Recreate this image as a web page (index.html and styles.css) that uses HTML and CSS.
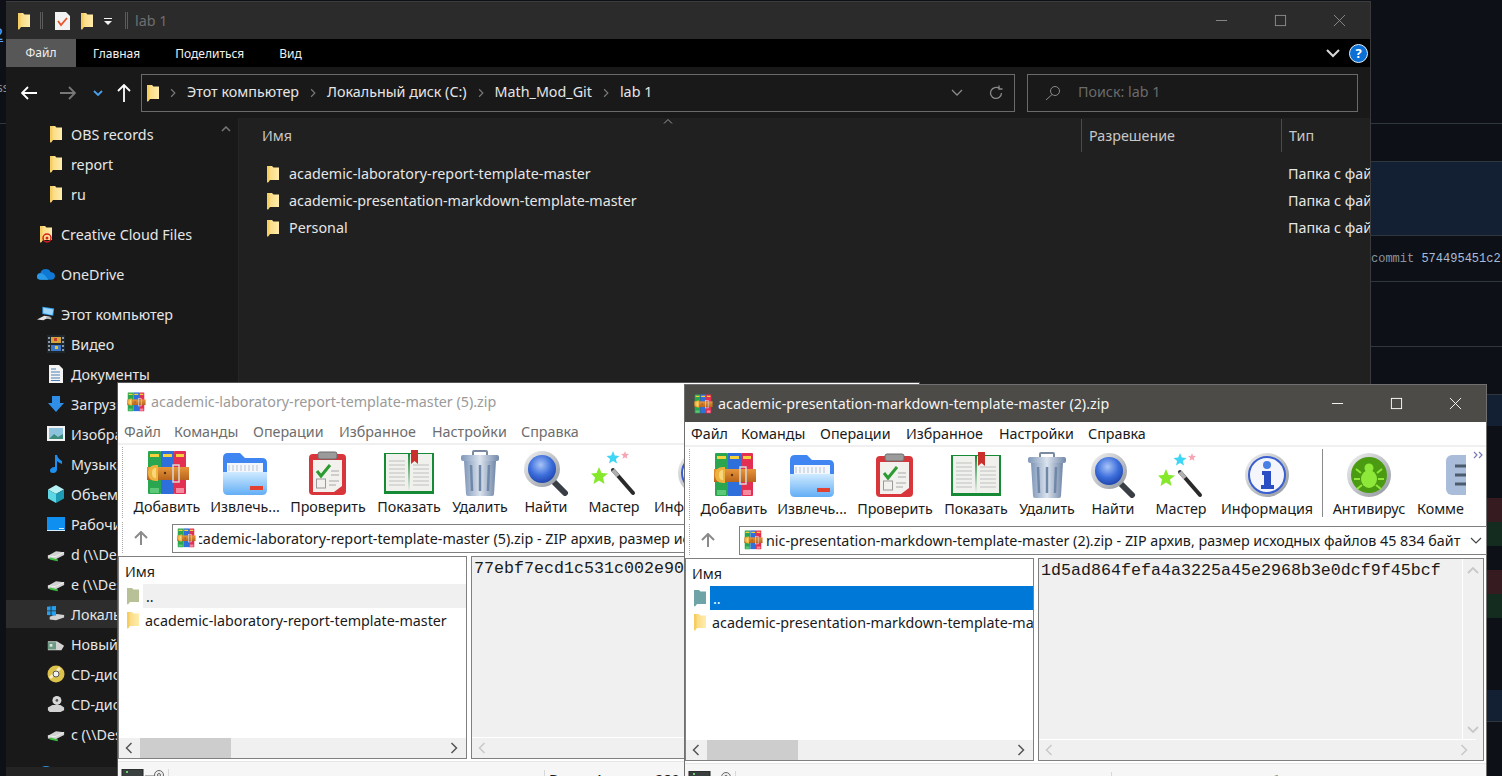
FILE: index.html
```html
<!DOCTYPE html>
<html lang="ru">
<head>
    <meta charset="UTF-8">
    <title>lab 1</title>
    <link rel="stylesheet" href="styles.css">
</head>
<body>
<svg class="defs" width="0" height="0">
    <defs>
        <linearGradient id="gFolder" x1="0" y1="0" x2="1" y2="0"><stop offset="0" stop-color="#f8d677"/><stop offset="1" stop-color="#ffecad"/></linearGradient>
        <linearGradient id="gBelt" x1="0" y1="0" x2="0" y2="1"><stop offset="0" stop-color="#e8963a"/><stop offset="1" stop-color="#b8641c"/></linearGradient>
        <linearGradient id="gBlue" x1="0" y1="0" x2="0" y2="1"><stop offset="0" stop-color="#cfeaff"/><stop offset="1" stop-color="#63aef5"/></linearGradient>
        <linearGradient id="gTrash" x1="0" y1="0" x2="1" y2="0"><stop offset="0" stop-color="#7f97b8"/><stop offset=".5" stop-color="#dbe3ee"/><stop offset="1" stop-color="#7288a8"/></linearGradient>
        <radialGradient id="gGlass" cx=".45" cy=".35" r=".7"><stop offset="0" stop-color="#a9c4f7"/><stop offset=".55" stop-color="#3d6fdc"/><stop offset="1" stop-color="#1b3fa8"/></radialGradient>
        <linearGradient id="gSilver" x1="0" y1="0" x2="1" y2="1"><stop offset="0" stop-color="#f2f2f2"/><stop offset="1" stop-color="#8f959c"/></linearGradient>

        <symbol id="folder" viewBox="0 0 18 18">
            <path d="M3 1h5l1.500 1.500H15V15H6l-2 2.500-1-.500z" fill="url(#gFolder)"/>
            <path d="M3 1h2.500v13.500L4 17.500 3 17z" fill="#f6cd62"/>
        </symbol>
        <symbol id="folderflat" viewBox="0 0 18 18">
            <path d="M3 1h5l1.500 1.500H15V15H6l-2 2.500-1-.500z" fill="currentColor"/>
        </symbol>
        <symbol id="rar" viewBox="0 0 46 46">
            <rect x="4" y="1" width="13" height="43" rx="1" fill="#2aa650"/>
            <rect x="17" y="1" width="13" height="43" fill="#2f6fdc"/>
            <rect x="30" y="1" width="12" height="43" rx="1" fill="#e22f52"/>
            <path d="M6 4h9v3H6zM19 4h9v3h-9zM32 4h8v3h-8z" fill="#f4d23c"/>
            <path d="M6 38h9v5H6z" fill="#5cc878"/>
            <path d="M32 38h8v5h-8z" fill="#f58aa0"/>
            <rect x="3" y="17" width="42" height="13" fill="url(#gBelt)"/>
            <path d="M12 15c-5 0-8 3-8 8s3 8 8 8h2V15z" fill="#eeb23f"/>
            <path d="M12 18c-3 0-4 2-4 5s1 5 4 5z" fill="#f8d77a"/>
            <rect x="29" y="15" width="6" height="17" fill="none" stroke="#d9d9d9" stroke-width="1.500"/>
            <circle cx="21" cy="23" r="1.200" fill="#5a3210"/>
        </symbol>
        <symbol id="extract" viewBox="0 0 46 46">
            <path d="M1 8q0-5 5-5h12l5 5h17q5 0 5 5v14H1z" fill="#3f86f2"/>
            <rect x="5" y="13" width="36" height="18" fill="#f3f6fa"/>
            <path d="M7 15v6M11 15v6M15 15v6M19 15v6M23 15v6M27 15v6M31 15v6M35 15v6" stroke="#b6c4d6"/>
            <path d="M1 22h44v18q0 5-5 5H6q-5 0-5-5z" fill="url(#gBlue)"/>
            <rect x="28" y="36" width="13" height="4" fill="#e2412f"/>
        </symbol>
        <symbol id="check" viewBox="0 0 46 46">
            <rect x="4" y="4" width="37" height="41" rx="4" fill="#d8363a"/>
            <path d="M8 10h29v26l-8 6H8z" fill="#f2f1ee"/>
            <rect x="13" y="2" width="19" height="7" rx="2" fill="#9b9b9b" stroke="#6d6d6d"/>
            <path d="M12 21l4 5 9-11" fill="none" stroke="#2d9b32" stroke-width="3"/>
            <rect x="11.500" y="29" width="9" height="9" fill="none" stroke="#9a9a9a"/>
            <path d="M26 21h8M26 25h8M24 31h10M24 35h7" stroke="#a8a8a8"/>
        </symbol>
        <symbol id="book" viewBox="0 0 50 46">
            <rect x="0" y="3" width="50" height="41" fill="#178a36"/>
            <path d="M2 4h22l1 37H2zM48 4H26l-1 37h23z" fill="#f0f0ec"/>
            <path d="M5 11h16M5 15h16M5 19h16M5 23h16M5 27h16M5 31h16M5 35h16M29 15h16M29 19h16M29 23h16M29 27h16M29 31h16M29 35h16" stroke="#d0d0d0" stroke-width="1.500"/>
            <path d="M27 0h7v14l-3.500-3-3.500 3z" fill="#c9302c"/>
        </symbol>
        <symbol id="trash" viewBox="0 0 40 46">
            <rect x="13" y="1" width="14" height="5" rx="1" fill="none" stroke="#7a8aa0" stroke-width="2"/>
            <rect x="1" y="5" width="38" height="6" rx="2" fill="url(#gTrash)"/>
            <path d="M4 11h32l-2 33q0 2-2 2H8q-2 0-2-2z" fill="url(#gTrash)"/>
            <path d="M11 15l1 26M20 15v26M29 15l-1 26" stroke="#7088a8" stroke-width="2.500"/>
        </symbol>
        <symbol id="lens" viewBox="0 0 46 46">
            <path d="M29 30l13 13" stroke="#3a3f46" stroke-width="6" stroke-linecap="round"/>
            <circle cx="19" cy="19" r="18" fill="url(#gSilver)"/>
            <circle cx="19" cy="19" r="14" fill="url(#gGlass)"/>
        </symbol>
        <symbol id="wand" viewBox="0 0 46 46">
            <path d="M22 20l20 23" stroke="#2a2a2a" stroke-width="4" stroke-linecap="round"/>
            <path d="M22 20l5 6" stroke="#b0b0b0" stroke-width="4"/>
            <path d="M8 17l2.500 6 6.500.500-5 4 1.500 6.500L8 30.500 2.500 34 4 27.500l-4-4 5.500-.500z" fill="#85e82a"/>
            <path d="M22 1l1.800 4.500 4.700.400-3.600 3 1.100 4.600-4-2.500-4 2.500 1.100-4.600-3.600-3 4.700-.400z" fill="#3fd6f5"/>
            <path d="M34 1l1 2.800 3 .200-2.300 1.900.800 2.900-2.500-1.600-2.500 1.600.800-2.900L30 4l3-.200z" fill="#f7a5b5"/>
        </symbol>
        <symbol id="info" viewBox="0 0 46 46">
            <circle cx="23" cy="23" r="22" fill="url(#gSilver)"/>
            <circle cx="23" cy="23" r="18" fill="#f4f6fb" stroke="#3a5fd0" stroke-width="2"/>
            <circle cx="23" cy="13" r="4" fill="#4a7fe6"/>
            <path d="M18 19h9v14h3v4H17v-4h3V23h-2z" fill="#2a4fc4"/>
        </symbol>
        <symbol id="bug" viewBox="0 0 46 46">
            <circle cx="23" cy="23" r="22" fill="url(#gSilver)"/>
            <circle cx="23" cy="23" r="18" fill="#4a9a12"/>
            <ellipse cx="23" cy="27" rx="8" ry="9" fill="#8ee83a"/>
            <circle cx="23" cy="16" r="4.500" fill="#8ee83a"/>
            <path d="M15 21l-5-4M31 21l5-4M14 27H8M32 27h6M16 33l-5 4M30 33l5 4" stroke="#8ee83a" stroke-width="2"/>
        </symbol>
        <symbol id="note" viewBox="0 0 46 46">
            <rect x="3" y="3" width="40" height="40" rx="6" fill="#a9bddb"/>
            <path d="M12 14h24M12 23h24M12 32h24" stroke="#4c5a6e" stroke-width="3"/>
        </symbol>
        <symbol id="chev" viewBox="0 0 8 12">
            <path d="M1.500 1l5 5-5 5" fill="none" stroke="currentColor" stroke-width="1.500"/>
        </symbol>
        <symbol id="video" viewBox="0 0 18 18">
            <rect x="0" y="0" width="18" height="18" fill="#20282f"/>
            <rect x="4" y="2" width="10" height="6" fill="#d8a23a"/><rect x="4" y="10" width="10" height="6" fill="#3d78c9"/>
            <path d="M7 3h3v3H7z" fill="#c2402e"/><path d="M8 11h3v3H8z" fill="#e2c23a"/>
            <path d="M1 2h2v2H1zM1 6h2v2H1zM1 10h2v2H1zM1 14h2v2H1zM15 2h2v2h-2zM15 6h2v2h-2zM15 10h2v2h-2zM15 14h2v2h-2z" fill="#8b97a3"/>
        </symbol>
        <symbol id="doc" viewBox="0 0 18 18">
            <path d="M2 0h10l4 4v14H2z" fill="#f4f4f4"/>
            <path d="M4 4h5M4 7h9M4 10h9M4 13h9M4 15.500h9" stroke="#4a7fb5"/>
        </symbol>
        <symbol id="dl" viewBox="0 0 18 18"><path d="M5 1h8v7h4l-8 9-8-9h4z" fill="#2f8fe8"/></symbol>
        <symbol id="pic" viewBox="0 0 18 18">
            <rect y="1" width="18" height="15" fill="#f2f2f2"/>
            <rect x="2" y="3" width="14" height="11" fill="#8ec3dd"/>
            <path d="M2 14l5-5 4 3 5-3v5z" fill="#3d8c7c"/>
        </symbol>
        <symbol id="music" viewBox="0 0 18 18"><path d="M8 0h2q1 4 5 6v3q-3-1-5-3v8q0 4-4 4-3 0-3-2.500T7 12h1z" fill="#1f8fee"/></symbol>
        <symbol id="cube" viewBox="0 0 18 18">
            <path d="M9 0l8 4.500L9 9 1 4.500z" fill="#b5f1f5"/><path d="M1 4.500L9 9v9l-8-4.500z" fill="#5fd6e3"/><path d="M17 4.500L9 9v9l8-4.500z" fill="#1c9db5"/>
        </symbol>
        <symbol id="desk" viewBox="0 0 18 18">
            <rect y="2" width="18" height="13" fill="#0f8ff0"/>
            <path d="M0 15h18v1H0zM12 13h5v1h-5z" fill="#d7ecff"/>
        </symbol>
        <symbol id="netdrive" viewBox="0 0 20 18">
            <path d="M1 11l9-5 9 1v3l-10 5-8-1z" fill="#d2d2d2"/>
            <path d="M1 11l8 1 10-5" fill="none" stroke="#f2f2f2"/>
            <path d="M3 14l9 2" stroke="#40c040" stroke-width="2"/>
        </symbol>
        <symbol id="windrive" viewBox="0 0 20 18">
            <path d="M3 12l8-3 8 1v3l-9 3-7-1z" fill="#d2d2d2"/>
            <path d="M0 1l4-.500V5H0zM5 .400L10 0v5H5zM0 6h4v4.500L0 10zM5 6h5v5l-5-.500z" fill="#25a0ee"/>
        </symbol>
        <symbol id="picdrive" viewBox="0 0 20 18">
            <path d="M1 6h10l8 5-3 5H1z" fill="#d2d2d2"/>
            <rect x="1" y="7" width="9" height="8" fill="#6b9a83"/>
            <rect x="3" y="9" width="3" height="3" fill="#e2e2e2"/>
        </symbol>
        <symbol id="cd" viewBox="0 0 18 18">
            <circle cx="9" cy="9" r="8.500" fill="#dcc24a"/>
            <path d="M3 13L13 3" stroke="#f5ecc0" stroke-width="3"/>
            <circle cx="9" cy="9" r="3" fill="#f2f2f2" stroke="#555"/>
        </symbol>
        <symbol id="cddrive" viewBox="0 0 20 18">
            <circle cx="11" cy="5" r="5" fill="#d8d8d8"/><circle cx="11" cy="5" r="1.500" fill="#555"/>
            <path d="M1 13l5-3h9l4 3v3l-4 2H3l-2-2z" fill="#d2d2d2"/>
        </symbol>
        <symbol id="cloud" viewBox="0 0 22 14">
            <path d="M5 14q-5 0-5-4 0-3.500 4-4 1.500-5 7-5 4 0 5.500 3.500 5.500.500 5.500 5 0 4.500-5 4.500z" fill="#0f78d4"/>
            <path d="M5 14q-5 0-5-4 0-3.500 4-4 4 0 6 3l4 5z" fill="#2a9ae8"/>
        </symbol>
        <symbol id="pc" viewBox="0 0 20 18">
            <path d="M6 1l13 2-1 8-12-2z" fill="#36a4f0"/>
            <path d="M7 2l11 2-1 6-10-2z" fill="#9dd6fa"/>
            <path d="M0 15l8-4 7 1-8 4z" fill="#e4e4e4"/>
            <path d="M10 12l6 1v2l-6-1z" fill="#bdbdbd"/>
        </symbol>
        <symbol id="globe" viewBox="0 0 18 18"><circle cx="9" cy="9" r="8" fill="#2f8fd8"/></symbol>
        <symbol id="tray" viewBox="0 0 44 14">
            <rect x="1" y="0" width="21" height="14" fill="#3a3f3f" stroke="#222"/>
            <path d="M5 2h2v2H5z" fill="#6fd06f"/>
            <path d="M24 8h10l2-2" fill="none" stroke="#666" stroke-width="3"/>
            <circle cx="38" cy="6" r="4.500" fill="#eee" stroke="#666"/>
            <circle cx="38" cy="6" r="1.500" fill="none" stroke="#666"/>
        </symbol>
    </defs>
</svg>

<div class="desktop">
    <!-- страница за окнами -->
    <div class="bg">
        <div class="bg-row bg-first"><span class="bg-link">2</span><span class="bg-cut">ss</span></div>
        <div class="bg-row"></div>
        <div class="bg-row line blue"></div>
        <div class="bg-row line"><span class="commit">commit <b>574495451c2</b></span></div>
        <div class="bg-row line"></div>
        <div class="bg-row line"></div>
        <div class="bg-row line blue"></div>
        <div class="bg-row"></div>
        <div class="bg-row red"></div>
        <div class="bg-row green"></div>
        <div class="bg-row"></div>
        <div class="bg-row red"></div>
        <div class="bg-row green"></div>
        <div class="bg-row"></div>
        <div class="bg-row blue"></div>
        <div class="bg-row line"></div>
    </div>

    <!-- проводник -->
    <div class="ex">
        <div class="ex-title">
            <svg class="ico"><use href="#folder"/></svg>
            <i class="ex-sep"></i>
            <svg class="ex-task" viewBox="0 0 15 18">
                <path d="M0 0h11l4 4v14H0z" fill="#f2f2f2"/>
                <path d="M3 9l3 4 6-7" fill="none" stroke="#e8542a" stroke-width="1.800"/>
            </svg>
            <svg class="ico"><use href="#folder"/></svg>
            <svg class="ex-drop" viewBox="0 0 8 7"><path d="M0 0h8v1H0zM0 3h8L4 7z" fill="#f2f2f2"/></svg>
            <i class="ex-sep ex-sep-last"></i>
            <span class="ex-name">lab 1</span>
            <div class="ex-caption">
                <svg viewBox="0 0 14 14"><path d="M1 7h12" stroke="currentColor"/></svg>
                <svg viewBox="0 0 14 14"><rect x="1.500" y="1.500" width="11" height="11" fill="none" stroke="currentColor"/></svg>
                <svg viewBox="0 0 14 14"><path d="M1 1l12 12M13 1L1 13" stroke="currentColor"/></svg>
            </div>
        </div>
        <div class="ex-tabs">
            <span class="tab-file">Файл</span>
            <span class="tab-home">Главная</span>
            <span class="tab-share">Поделиться</span>
            <span class="tab-view">Вид</span>
            <svg class="tabs-fold" viewBox="0 0 14 9"><path d="M1 1l6 6 6-6" fill="none" stroke="#d8d8d8" stroke-width="2"/></svg>
            <span class="help">?</span>
        </div>
        <div class="ex-nav">
            <svg class="nav-back" viewBox="0 0 16 14"><path d="M7 1L1 7l6 6M1 7h15" fill="none" stroke="#fff" stroke-width="1.800"/></svg>
            <svg class="nav-fwd" viewBox="0 0 16 14"><path d="M9 1l6 6-6 6M15 7H0" fill="none" stroke="#777" stroke-width="1.800"/></svg>
            <svg class="nav-recent" viewBox="0 0 10 6"><path d="M1 1l4 4 4-4" fill="none" stroke="#4a9fe8" stroke-width="1.800"/></svg>
            <svg class="nav-up" viewBox="0 0 14 18"><path d="M1 7l6-6 6 6M7 1v17" fill="none" stroke="#fff" stroke-width="1.800"/></svg>
            <div class="addr">
                <svg class="ico addr-folder"><use href="#folder"/></svg>
                <svg class="crumb-chev"><use href="#chev"/></svg><span>Этот компьютер</span>
                <svg class="crumb-chev"><use href="#chev"/></svg><span>Локальный диск (C:)</span>
                <svg class="crumb-chev"><use href="#chev"/></svg><span>Math_Mod_Git</span>
                <svg class="crumb-chev"><use href="#chev"/></svg><span>lab 1</span>
                <svg class="addr-drop" viewBox="0 0 12 7"><path d="M1 1l5 5 5-5" fill="none" stroke="#8a8a8a" stroke-width="1.300"/></svg>
                <svg class="addr-refresh" viewBox="0 0 16 16"><path d="M13.500 8a5.500 5.500 0 1 1-2-4.300M11 .500v3.500h3.500" fill="none" stroke="#8a8a8a" stroke-width="1.300"/></svg>
            </div>
            <div class="search">
                <svg viewBox="0 0 16 16"><circle cx="10" cy="6" r="4.500" fill="none" stroke="#8a8a8a"/><path d="M7 9.500L1 15" stroke="#8a8a8a"/></svg>
                <span>Поиск: lab 1</span>
            </div>
        </div>
        <div class="ex-body">
            <div class="side">
                <svg class="side-up" viewBox="0 0 10 6"><path d="M1 5l4-4 4 4" fill="none" stroke="#777" stroke-width="1.500"/></svg>
                <div class="side-row sub"><svg class="ico"><use href="#folder"/></svg>OBS records</div>
                <div class="side-row sub"><svg class="ico"><use href="#folder"/></svg>report</div>
                <div class="side-row sub group-end"><svg class="ico"><use href="#folder"/></svg>ru</div>
                <div class="side-row top group-end">
                    <svg class="ico" viewBox="0 0 18 18"><use href="#folder"/><circle cx="10" cy="13" r="4" fill="none" stroke="#d8201c" stroke-width="1.500"/><circle cx="10" cy="13" r="1.500" fill="#d8201c"/></svg>Creative Cloud Files
                </div>
                <div class="side-row top group-end"><svg class="ico ico-cloud"><use href="#cloud"/></svg>OneDrive</div>
                <div class="side-row top"><svg class="ico"><use href="#pc"/></svg>Этот компьютер</div>
                <div class="side-row sub"><svg class="ico"><use href="#video"/></svg>Видео</div>
                <div class="side-row sub"><svg class="ico"><use href="#doc"/></svg>Документы</div>
                <div class="side-row sub"><svg class="ico"><use href="#dl"/></svg>Загрузки</div>
                <div class="side-row sub"><svg class="ico"><use href="#pic"/></svg>Изображения</div>
                <div class="side-row sub"><svg class="ico"><use href="#music"/></svg>Музыка</div>
                <div class="side-row sub"><svg class="ico"><use href="#cube"/></svg>Объемные объекты</div>
                <div class="side-row sub"><svg class="ico"><use href="#desk"/></svg>Рабочий стол</div>
                <div class="side-row sub"><svg class="ico"><use href="#netdrive"/></svg>d (\\Desktop)</div>
                <div class="side-row sub"><svg class="ico"><use href="#netdrive"/></svg>e (\\Desktop)</div>
                <div class="side-row sub hover"><svg class="ico"><use href="#windrive"/></svg>Локальный диск (C:)</div>
                <div class="side-row sub"><svg class="ico"><use href="#picdrive"/></svg>Новый том</div>
                <div class="side-row sub"><svg class="ico"><use href="#cd"/></svg>CD-дисковод</div>
                <div class="side-row sub"><svg class="ico"><use href="#cddrive"/></svg>CD-дисковод</div>
                <div class="side-row sub group-end"><svg class="ico"><use href="#netdrive"/></svg>c (\\Desktop)</div>
                <div class="side-row top"><svg class="ico"><use href="#globe"/></svg>Сеть</div>
            </div>
            <div class="files">
                <div class="cols">
                    <span class="col-name">Имя</span>
                    <svg class="col-sort" viewBox="0 0 10 5"><path d="M1 4.500l4-4 4 4" fill="none" stroke="#999"/></svg>
                    <span class="col-next">Разрешение</span>
                    <span class="col-next">Тип</span>
                </div>
                <div class="file"><svg class="ico"><use href="#folder"/></svg><span class="file-name">academic-laboratory-report-template-master</span><span class="file-type">Папка с файлами</span></div>
                <div class="file"><svg class="ico"><use href="#folder"/></svg><span class="file-name">academic-presentation-markdown-template-master</span><span class="file-type">Папка с файлами</span></div>
                <div class="file"><svg class="ico"><use href="#folder"/></svg><span class="file-name">Personal</span><span class="file-type">Папка с файлами</span></div>
            </div>
        </div>
        <div class="ex-status"></div>
    </div>

    <!-- левый архив -->
    <div class="rar rar-back">
        <div class="rar-title">
            <svg class="rar-logo"><use href="#rar"/></svg>
            <span>academic-laboratory-report-template-master (5).zip</span>
        </div>
        <div class="rar-menu"><span>Файл</span><span>Команды</span><span>Операции</span><span>Избранное</span><span>Настройки</span><span>Справка</span></div>
        <div class="bar-row">
            <div class="bar">
                <div class="btn"><svg><use href="#rar"/></svg>Добавить</div>
                <div class="btn"><svg><use href="#extract"/></svg>Извлечь...</div>
                <div class="btn"><svg><use href="#check"/></svg>Проверить</div>
                <div class="btn btn-wide"><svg><use href="#book"/></svg>Показать</div>
                <div class="btn"><svg><use href="#trash"/></svg>Удалить</div>
                <div class="btn"><svg><use href="#lens"/></svg>Найти</div>
                <div class="btn"><svg><use href="#wand"/></svg>Мастер</div>
                <div class="btn"><svg><use href="#info"/></svg>Информация</div>
            </div>
        </div>
        <div class="path">
            <svg class="path-up" viewBox="0 0 14 14"><path d="M1 7l6-6 6 6M7 1v13" fill="none" stroke="#8a8a8a" stroke-width="2"/></svg>
            <div class="path-box">
                <svg class="rar-logo"><use href="#rar"/></svg>
                <span class="path-text path-cut">cademic-laboratory-report-template-master (5).zip - ZIP архив, размер исходных файлов 289 байт</span>
            </div>
        </div>
        <div class="panes">
            <div class="tree">
                <div class="tree-head">Имя</div>
                <div class="tree-row"><svg class="ico tint-back"><use href="#folderflat"/></svg><span class="tree-up idle">..</span></div>
                <div class="tree-row"><svg class="ico"><use href="#folder"/></svg><span class="tree-item">academic-laboratory-report-template-master</span></div>
                <div class="hbar">
                    <svg class="sb-chev flip"><use href="#chev"/></svg>
                    <i class="thumb"></i>
                    <svg class="sb-chev"><use href="#chev"/></svg>
                </div>
            </div>
            <div class="hash">
                <div class="hash-text">77ebf7ecd1c531c002e90</div>
                <div class="hbar hbar-off"><svg class="sb-chev flip"><use href="#chev"/></svg></div>
            </div>
        </div>
        <div class="state">
            <svg class="state-ico"><use href="#tray"/></svg>
            <span class="state-text">Всего: 1 папка, 289 байт</span>
        </div>
    </div>

    <!-- правый архив -->
    <div class="rar">
        <div class="rar-title">
            <svg class="rar-logo"><use href="#rar"/></svg>
            <span>academic-presentation-markdown-template-master (2).zip</span>
            <div class="rar-caption">
                <svg viewBox="0 0 14 14"><path d="M1 7h12" stroke="#fff"/></svg>
                <svg viewBox="0 0 14 14"><rect x="1.500" y="1.500" width="11" height="11" fill="none" stroke="#fff"/></svg>
                <svg viewBox="0 0 14 14"><path d="M1 1l12 12M13 1L1 13" stroke="#fff"/></svg>
            </div>
        </div>
        <div class="rar-menu"><span>Файл</span><span>Команды</span><span>Операции</span><span>Избранное</span><span>Настройки</span><span>Справка</span></div>
        <div class="bar-row">
            <div class="bar">
                <div class="btn"><svg><use href="#rar"/></svg>Добавить</div>
                <div class="btn"><svg><use href="#extract"/></svg>Извлечь...</div>
                <div class="btn"><svg><use href="#check"/></svg>Проверить</div>
                <div class="btn btn-wide"><svg><use href="#book"/></svg>Показать</div>
                <div class="btn"><svg><use href="#trash"/></svg>Удалить</div>
                <div class="btn"><svg><use href="#lens"/></svg>Найти</div>
                <div class="btn"><svg><use href="#wand"/></svg>Мастер</div>
                <div class="btn"><svg><use href="#info"/></svg>Информация</div>
                <i class="bar-sep"></i>
                <div class="btn"><svg><use href="#bug"/></svg>Антивирус</div>
                <div class="btn btn-last"><svg><use href="#note"/></svg>Комме</div>
            </div>
            <svg class="bar-more" viewBox="0 0 11 8"><path d="M1 1l3 3-3 3M6 1l3 3-3 3" fill="none" stroke="#7a7ab8" stroke-width="1.200"/></svg>
        </div>
        <div class="path">
            <svg class="path-up" viewBox="0 0 14 14"><path d="M1 7l6-6 6 6M7 1v13" fill="none" stroke="#8a8a8a" stroke-width="2"/></svg>
            <div class="path-box">
                <svg class="rar-logo"><use href="#rar"/></svg>
                <span class="path-text">nic-presentation-markdown-template-master (2).zip - ZIP архив, размер исходных файлов 45 834 байт</span>
                <svg class="path-drop" viewBox="0 0 12 7"><path d="M1 1l5 5 5-5" fill="none" stroke="#444" stroke-width="1.200"/></svg>
            </div>
        </div>
        <div class="panes">
            <div class="tree">
                <div class="tree-head">Имя</div>
                <div class="tree-row"><svg class="ico tint-sel"><use href="#folderflat"/></svg><span class="tree-up sel">..</span></div>
                <div class="tree-row"><svg class="ico"><use href="#folder"/></svg><span class="tree-item">academic-presentation-markdown-template-ma</span></div>
                <div class="hbar">
                    <svg class="sb-chev flip"><use href="#chev"/></svg>
                    <i class="thumb"></i>
                    <svg class="sb-chev"><use href="#chev"/></svg>
                </div>
            </div>
            <div class="hash">
                <div class="hash-main">
                    <div class="hash-text">1d5ad864fefa4a3225a45e2968b3e0dcf9f45bcf</div>
                    <div class="vbar">
                        <svg viewBox="0 0 12 7"><path d="M1 6l5-5 5 5" fill="none" stroke="#c8c8c8" stroke-width="1.800"/></svg>
                        <svg viewBox="0 0 12 7"><path d="M1 1l5 5 5-5" fill="none" stroke="#c8c8c8" stroke-width="1.800"/></svg>
                    </div>
                </div>
                <div class="hbar hbar-off"><svg class="sb-chev flip"><use href="#chev"/></svg><svg class="sb-chev"><use href="#chev"/></svg></div>
            </div>
        </div>
        <div class="state">
            <svg class="state-ico"><use href="#tray"/></svg>
            <span class="state-text">Всего: 1 папка, 45 834 байт</span>
        </div>
    </div>
</div>
</body>
</html>
```
FILE: styles.css
```css
html, body {
    margin: 0;
    padding: 0;
    background: #0d1117;
}
body {
    font-family: "Noto Sans", Roboto, sans-serif;
    font-size: 14.300px;
    overflow: hidden;
}
.defs {
    position: absolute;
}
.desktop {
    position: relative;
    width: 1502px;
    height: 776px;
    overflow: hidden;
}
.ico {
    flex: none;
    width: 18px;
    height: 18px;
}

/* страница за окнами */
.bg {
    position: absolute;
    inset: 0;
    display: grid;
    grid-template-rows: 124px 37px 74px 46px 65px 48px 32px 72px 24px 24px 24px 24px 24px 72px 31px 1fr;
    padding-left: 6px;
    background: #0d1117;
}
.bg-row {
    display: flex;
    align-items: center;
}
.line {
    border-top: 1px solid #30363d;
}
.blue { background: #132033; }
.red { background: #361b20; }
.green { background: #142b20; }
.bg-first {
    flex-direction: column;
    align-items: flex-start;
    margin-left: -6px;
    border-bottom: 1px solid #30363d;
}
.bg-link {
    margin: 25px 0 0 -6px;
    color: #58a6ff;
    text-decoration: underline;
    font-size: 16px;
    line-height: 18px;
}
.bg-cut {
    margin: 37px 0 0 -3px;
    color: #8b949e;
    font-size: 12px;
    line-height: 16px;
}
.commit {
    margin: 1px 0 0 1365px;
    font-family: "Liberation Mono", monospace;
    font-size: 12px;
    color: #8b949e;
    white-space: nowrap;
}
.commit b {
    font-weight: normal;
    color: #a9bcd8;
}

/* проводник */
.ex {
    position: absolute;
    left: 6px;
    top: 1px;
    width: 1364px;
    height: 774px;
    display: flex;
    flex-direction: column;
    border-top: 1px solid #3c3c3c;
    border-right: 1px solid #3a3a3a;
    color: #e6e6e6;
    background: #191919;
}
.ex-title {
    flex: none;
    height: 37px;
    display: flex;
    align-items: center;
    padding-left: 9px;
    background: #2b2b2b;
}
.ex-sep {
    flex: none;
    width: 1px;
    height: 17px;
    margin: 0 12px 0 7px;
    border: 1px solid #5c5c5c;
    border-width: 0 1px;
}
.ex-sep-last {
    margin: 0 7px 0 13px;
}
.ex-task {
    width: 15px;
    height: 18px;
    margin-right: 8px;
}
.ex-drop {
    width: 8px;
    height: 7px;
    margin: 2px 0 0 8px;
}
.ex-name {
    color: #6f6f6f;
}
.ex-caption {
    margin-left: auto;
    display: flex;
    gap: 46px;
    padding-right: 24px;
    color: #8c8c8c;
}
.ex-caption svg {
    width: 13px;
    height: 13px;
}
.ex-tabs {
    flex: none;
    height: 28px;
    display: flex;
    align-items: center;
    background: #000;
    font-size: 12px;
    color: #f0f0f0;
}
.tab-file {
    width: 70px;
    height: 28px;
    line-height: 28px;
    text-align: center;
    background: #575757;
}
.tab-home { margin-left: 17px; }
.tab-share { margin-left: 35px; }
.tab-view { margin-left: 35px; }
.tabs-fold {
    width: 14px;
    height: 9px;
    margin-left: auto;
}
.help {
    width: 17px;
    height: 17px;
    margin: 0 2px 0 9px;
    border: 1px solid #e8f2fb;
    border-radius: 50%;
    background: #0b6fd6;
    color: #fff;
    font-weight: bold;
    font-size: 13px;
    line-height: 17px;
    text-align: center;
}
.ex-nav {
    flex: none;
    height: 51px;
    display: flex;
    align-items: center;
    background: #191919;
}
.nav-back { width: 16px; height: 14px; margin-left: 15px; }
.nav-fwd { width: 16px; height: 14px; margin-left: 23px; }
.nav-recent { width: 10px; height: 6px; margin-left: 17px; }
.nav-up { width: 14px; height: 18px; margin-left: 14px; }
.addr, .search {
    height: 36px;
    display: flex;
    align-items: center;
    border: 1px solid #6a6a6a;
    white-space: nowrap;
    line-height: 34px;
}
.addr span, .search span {
    height: 36px;
}
.addr {
    width: 872px;
    margin: 0 12px 0 10px;
    color: #e6e6e6;
}
.addr-folder { margin-left: 2px; }
.crumb-chev {
    flex: none;
    width: 6px;
    height: 10px;
    margin: 0 11px 0 11px;
    color: #7a7a7a;
}
.addr-folder + .crumb-chev { margin-left: 8px; }
.addr-drop {
    width: 12px;
    height: 7px;
    margin-left: auto;
}
.addr-refresh {
    width: 16px;
    height: 16px;
    margin: 0 10px 0 25px;
}
.search {
    width: 329px;
    color: #6b6b6b;
}
.search svg {
    width: 16px;
    height: 16px;
    margin: 0 17px 0 17px;
}
.ex-body {
    flex: 1;
    min-height: 0;
    display: flex;
    overflow: hidden;
}
.side {
    position: relative;
    flex: none;
    width: 232px;
    padding-top: 1px;
    background: #191919;
    border-right: 1px solid #262626;
}
.side-up {
    position: absolute;
    right: 7px;
    top: 8px;
    width: 10px;
    height: 6px;
}
.side-row {
    height: 30px;
    display: flex;
    align-items: center;
    white-space: nowrap;
    gap: 6px;
}
.side-row.sub { padding-left: 41px; }
.side-row.top { padding-left: 31px; }
.group-end { margin-bottom: 10px; }
.hover {
    height: 28px;
    margin: 1px 0;
    background: #2d2d2d;
}
.ico-cloud {
    height: 14px;
}
.files {
    flex: 1;
    min-width: 0;
    background: #202020;
    overflow: hidden;
}
.cols {
    position: relative;
    height: 35px;
    display: grid;
    grid-template-columns: 842px 200px 1fr;
    color: #c8c8c8;
    white-space: nowrap;
}
.col-name {
    padding-left: 23px;
    line-height: 35px;
}
.col-sort {
    position: absolute;
    left: 424px;
    top: 1px;
    width: 10px;
    height: 5px;
}
.col-next {
    height: 33px;
    margin-top: 1px;
    line-height: 33px;
    padding-left: 7px;
    border-left: 1px solid #4a4a4a;
}
.file {
    height: 27px;
    display: flex;
    align-items: center;
    padding-left: 25px;
    white-space: nowrap;
}
.cols + .file { margin-top: 7px; }
.file .ico { margin-right: 7px; }
.file-name { width: 999px; flex: none; }
.ex-status {
    flex: none;
    height: 9px;
    background: #232323;
}

/* архиватор */
.rar {
    position: absolute;
    left: 684px;
    top: 384px;
    width: 801px;
    height: 420px;
    display: flex;
    flex-direction: column;
    border: 1px solid #707070;
    background: #fff;
    color: #1a1a1a;
}
.rar-back {
    left: 117px;
    top: 382px;
    border-color: #555;
}
.rar-title {
    flex: none;
    height: 37px;
    display: flex;
    align-items: center;
    padding-left: 8px;
    background: #4d4b48;
    color: #f4f4f4;
    white-space: nowrap;
}
.rar-back .rar-title {
    background: #fff;
    color: #9a9a9a;
}
.rar-logo {
    flex: none;
    width: 20px;
    height: 20px;
    margin-right: 5px;
}
.rar-caption {
    margin-left: auto;
    display: flex;
    gap: 46px;
    padding-right: 24px;
}
.rar-caption svg {
    width: 13px;
    height: 13px;
}
.rar-menu {
    flex: none;
    height: 23px;
    display: grid;
    grid-template-columns: 50px 79px 86px 93px 89px auto;
    align-items: center;
    padding-left: 6px;
    background: #fff;
    white-space: nowrap;
}
.rar-back .rar-menu {
    color: #6d6d6d;
}
.bar-row {
    position: relative;
    flex: none;
    height: 75px;
    display: flex;
    border-top: 2px solid #f0f0f0;
    background: #fff;
}
.bar {
    flex: none;
    width: 781px;
    box-sizing: border-box;
    display: grid;
    grid-template-columns: 74px 82px 84px 78px 64px 68px 68px 104px 6px 88px 106px;
    padding-left: 12px;
    overflow: hidden;
}
.bar-row::before, .path::before {
    content: "";
    position: absolute;
    left: 4px;
    top: 2px;
    bottom: 2px;
    border-left: 1px dotted #aaa;
}
.btn {
    display: flex;
    flex-direction: column;
    align-items: center;
    padding-top: 5px;
    white-space: nowrap;
    line-height: 18px;
}
.btn svg {
    flex: none;
    width: 46px;
    height: 46px;
    margin-bottom: 2px;
}
.btn.btn-wide svg {
    width: 50px;
}
.btn-last {
    align-items: flex-start;
    padding-left: 4px;
}
.btn-last svg {
    margin-left: 26px;
}
.bar-sep {
    width: 1px;
    height: 68px;
    margin: 2px 0 0 3px;
    background: #8a8a8a;
}
.bar-more {
    flex: none;
    width: 11px;
    height: 8px;
    margin: 4px 0 0 7px;
}
.path {
    position: relative;
    flex: none;
    height: 35px;
    display: flex;
    align-items: center;
    background: #fff;
}
.path-up {
    flex: none;
    width: 14px;
    height: 14px;
    margin: 0 24px 0 16px;
}
.path-box {
    flex: none;
    width: 743px;
    height: 27px;
    margin-top: 1px;
    display: flex;
    align-items: center;
    padding-left: 3px;
    border: 1px solid #808080;
    white-space: nowrap;
    overflow: hidden;
}
.path-box .rar-logo {
    margin-right: 3px;
}
.path-text {
    flex: 1;
    min-width: 0;
    overflow: hidden;
}
.path-cut {
    text-indent: -3px;
}
.path-drop {
    flex: none;
    width: 12px;
    height: 7px;
    margin: 0 4px 0 6px;
}
.panes {
    flex: none;
    height: 203px;
    display: flex;
    gap: 4px;
    margin-top: 1px;
}
.tree, .hash {
    position: relative;
    flex: none;
    display: flex;
    flex-direction: column;
    box-sizing: border-box;
    height: 203px;
    border: 1px solid #808080;
    white-space: nowrap;
    overflow: hidden;
}
.tree {
    width: 349px;
}
.tree-head {
    height: 27px;
    line-height: 29px;
    padding-left: 6px;
}
.tree-row {
    flex: none;
    height: 24px;
    display: flex;
    align-items: center;
    padding-left: 5px;
}
.tree-row .ico {
    margin-right: 1px;
}
.tint-back { color: #b7c096; }
.tint-sel { color: #6ea3a8; }
.tree-up {
    flex: 1;
    height: 24px;
    line-height: 26px;
    padding-left: 3px;
}
.tree-up.idle { background: #f0f0f0; }
.tree-up.sel { background: #0078d7; color: #fff; }
.tree-item {
    padding-left: 2px;
}
.hbar {
    position: absolute;
    left: 0;
    right: 0;
    bottom: 0;
    height: 20px;
    display: flex;
    align-items: center;
    padding: 0 8px 0 5px;
    background: #f0f0f0;
    color: #555;
}
.thumb {
    width: 91px;
    height: 20px;
    margin: 0 auto 0 7px;
    background: #cdcdcd;
}
.sb-chev {
    flex: none;
    width: 8px;
    height: 12px;
    margin-left: 1px;
}
.flip {
    transform: scaleX(-1);
}
.hash {
    width: 446px;
    background: #f0f0f0;
}
.hbar-off {
    width: 424px;
    right: auto;
    padding-left: 5px;
    color: #c8c8c8;
    justify-content: space-between;
    border-top: 1px solid #fff;
}
.hash-main {
    display: flex;
    height: 180px;
}
.hash-text {
    flex: 1;
    padding: 3px 0 0 2px;
    font-family: "Liberation Mono", monospace;
    font-size: 16.670px;
    line-height: 18px;
}
.vbar {
    flex: none;
    width: 20px;
    display: flex;
    flex-direction: column;
    justify-content: space-between;
    align-items: center;
    padding: 8px 0 0;
    border-left: 1px solid #fff;
}
.vbar svg {
    width: 12px;
    height: 7px;
    margin-bottom: 6px;
}
.state {
    flex: none;
    height: 20px;
    display: flex;
    align-items: center;
    margin-top: 2px;
    border-top: 1px solid #e6e6e6;
    background: #f6f6f6;
}
.state-ico {
    width: 44px;
    height: 14px;
    margin: 8px 4px 0 3px;
    padding-right: 3px;
    border-right: 1px solid #d8d8d8;
}
.state-text {
    margin: 14px 0 0 371px;
    padding-left: 4px;
    border-left: 1px solid #d8d8d8;
}
```
